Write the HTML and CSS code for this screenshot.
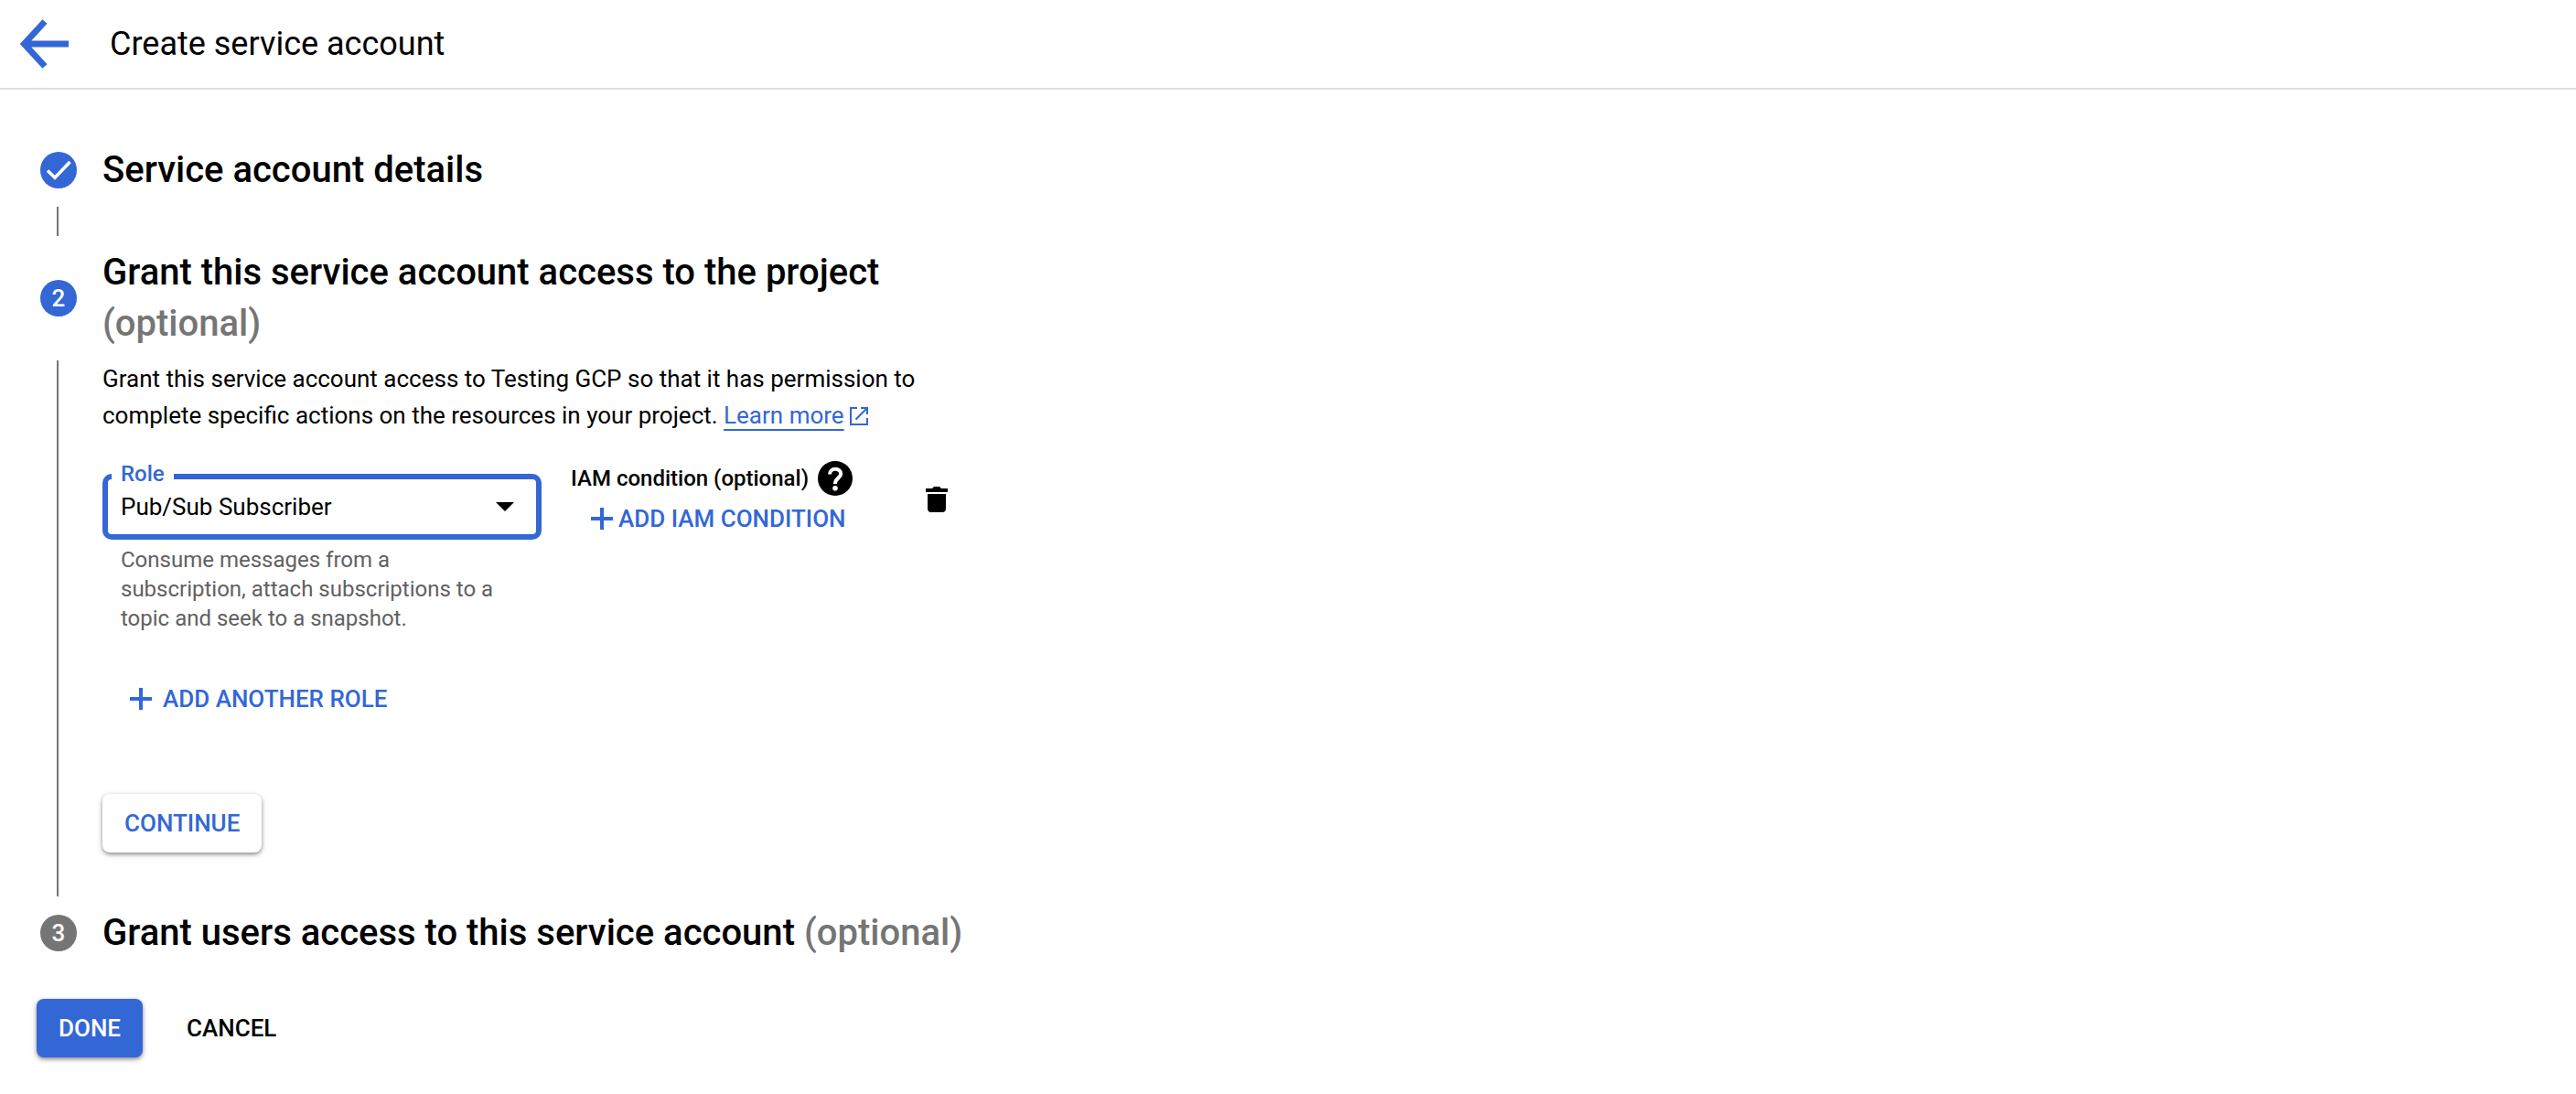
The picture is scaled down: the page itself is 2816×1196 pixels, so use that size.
FILE: index.html
```html
<!DOCTYPE html>
<html lang="en">
<head>
<meta charset="utf-8">
<meta name="viewport" content="width=device-width, initial-scale=1">
<title>Create service account</title>
<link rel="stylesheet" href="styles.css">
</head>
<body>
<header class="topbar">
  <button class="back" type="button" aria-label="Back">
    <svg width="54" height="54" viewBox="0 0 54 54" fill="none" stroke="currentColor" stroke-width="7"><path d="M53 27H6M27 2.500L4.500 27L27 51.500"/></svg>
  </button>
  <h1 class="title">Create service account</h1>
</header>
<main class="content">
  <ol class="steps">
    <li class="step">
      <span class="badge">
        <svg width="28" height="22" viewBox="0 0 28 22" fill="none" stroke="currentColor" stroke-width="3.600"><path d="M2 11.500L10 19.200L26.500 2"/></svg>
      </span>
      <h2 class="heading">Service account details</h2>
      <div class="line line-short"></div>
    </li>
    <li class="step">
      <span class="badge">2</span>
      <h2 class="heading">Grant this service account access to the project <span class="optional">(optional)</span></h2>
      <div class="line"></div>
      <div class="body">
        <p class="intro">Grant this service account access to Testing GCP so that it has permission to complete specific actions on the resources in your project. <a class="link" href="#learn">Learn more</a> <svg class="external" width="20" height="20" viewBox="0 0 20 20" fill="none" stroke="currentColor" stroke-width="2"><path d="M8 1H1V19H19V12M12 1H19V8M18.500 1.500L6.500 13.500"/></svg></p>
        <div class="binding">
          <div class="role">
            <div class="select-box">
              <label class="role-label" for="role">Role</label>
              <select class="role-select" id="role" aria-describedby="role-help"><option>Pub/Sub Subscriber</option></select>
              <svg class="caret" width="20" height="10" viewBox="0 0 20 10"><path d="M0 0H20L10 10Z"/></svg>
            </div>
            <p class="help" id="role-help">Consume messages from a subscription, attach subscriptions to a topic and seek to a snapshot.</p>
          </div>
          <div class="condition">
            <div class="condition-title">IAM condition (optional)
              <button class="icon-button" type="button" aria-label="About IAM conditions">
                <svg width="38" height="38" viewBox="0 0 38 38"><circle cx="19" cy="19" r="19"/><path d="M13 14.500C13 7 25.200 7 25.200 14C25.200 18.500 19 18.500 19 25" fill="none" stroke="#fff" stroke-width="4"/><circle cx="19" cy="29.800" r="2.800" fill="#fff"/></svg>
              </button>
            </div>
            <button class="text-button add-condition" type="button"><svg width="24" height="24" viewBox="0 0 24 24" stroke="currentColor" stroke-width="4"><path d="M0 12H24M12 0V24"/></svg>ADD IAM CONDITION</button>
          </div>
          <button class="icon-button delete" type="button" aria-label="Delete role">
            <svg width="24" height="28" viewBox="0 0 24 28" fill="currentColor"><path d="M0 2H7L9 0H15L17 2H24V6H0ZM2 8H22V24Q22 28 18 28H6Q2 28 2 24Z"/></svg>
          </button>
        </div>
        <button class="text-button add-role" type="button"><svg width="24" height="24" viewBox="0 0 24 24" stroke="currentColor" stroke-width="4"><path d="M0 12H24M12 0V24"/></svg>ADD ANOTHER ROLE</button>
        <button class="button" type="button">CONTINUE</button>
      </div>
    </li>
    <li class="step">
      <span class="badge badge-idle">3</span>
      <h2 class="heading">Grant users access to this service account <span class="optional">(optional)</span></h2>
    </li>
  </ol>
  <div class="actions">
    <button class="button primary" type="button">DONE</button>
    <button class="button plain" type="button">CANCEL</button>
  </div>
</main>
</body>
</html>
```
FILE: styles.css
```css
* { box-sizing: border-box; }
body {
  margin: 0;
  background: #fff;
  color: #000;
  font: 400 26px/40px Roboto, sans-serif;
}
h1, h2, p, ol { margin: 0; padding: 0; }
button {
  border: 0;
  padding: 0;
  background: none;
  font: 500 26px/32px Roboto, sans-serif;
  color: inherit;
  cursor: pointer;
}
svg { display: block; flex: none; }

.topbar {
  display: flex;
  align-items: center;
  gap: 44px;
  height: 98px;
  padding: 0 22px;
  border-bottom: 2px solid #dfdfdf;
}
.back { color: #3367d6; }
.title { font-size: 36px; font-weight: 400; }

.content { max-width: 1120px; padding: 60px 24px 40px 40px; }
.steps {
  display: grid;
  gap: 12px;
  padding-left: 4px;
  list-style: none;
}
.step {
  display: grid;
  grid-template-columns: 40px 1fr;
  gap: 12px 28px;
  align-items: center;
}
.badge {
  display: flex;
  align-items: center;
  justify-content: center;
  width: 40px;
  height: 40px;
  border-radius: 50%;
  background: #3367d6;
  color: #fff;
  font-weight: 500;
}
.badge-idle { background: #757575; }
.heading { font-size: 40px; line-height: 56px; font-weight: 500; }
.optional { color: #757575; }
.line {
  align-self: stretch;
  width: 2px;
  margin-left: 18px;
  background: #757575;
}
.line-short { height: 32px; }

.body {
  display: flex;
  flex-direction: column;
  align-items: flex-start;
  padding-bottom: 48px;
}
.intro { max-width: 920px; }
.link {
  color: #3367d6;
  text-decoration: underline 2px;
  text-underline-offset: 6px;
  text-decoration-skip-ink: none;
}
.external { display: inline-block; vertical-align: -2px; color: #3367d6; }

.binding { display: flex; align-items: flex-start; margin-top: 44px; }
.role { width: 480px; margin-right: 32px; }
.select-box { position: relative; }
.role-label {
  position: absolute;
  top: -12px;
  left: 10px;
  padding: 0 10px;
  background: #fff;
  color: #3367d6;
  font-size: 24px;
  line-height: 24px;
  font-weight: 500;
}
.role-select {
  display: block;
  width: 100%;
  height: 72px;
  padding: 0 48px 0 14px;
  border: 6px solid #3367d6;
  border-radius: 10px;
  outline: 0;
  appearance: none;
  background: #fff;
  color: #000;
  font: inherit;
}
.caret { position: absolute; top: 31px; right: 30px; pointer-events: none; }
.help {
  padding: 6px 36px 0 20px;
  color: #616161;
  font-size: 24px;
  line-height: 32px;
}
.condition {
  display: flex;
  flex-direction: column;
  align-items: flex-start;
  gap: 8px;
  margin-top: -15px;
}
.condition-title {
  display: flex;
  align-items: center;
  gap: 10px;
  font-size: 24px;
  font-weight: 500;
}
.text-button {
  display: flex;
  align-items: center;
  gap: 12px;
  color: #3367d6;
}
.add-condition { gap: 6px; margin-left: 22px; }
.delete { margin: 14px 0 0 80px; }
.add-role { margin: 56px 0 0 30px; }

.button {
  height: 64px;
  padding: 0 24px;
  border-radius: 8px;
  background: #fff;
  color: #3367d6;
  box-shadow: 0 2px 4px rgba(0, 0, 0, .4), 0 2px 8px rgba(60, 64, 67, .12);
}
.body .button { margin-top: 88px; }
.actions { display: flex; gap: 24px; margin-top: 44px; }
.primary { background: #3367d6; color: #fff; }
.plain { color: #000; box-shadow: none; }
```
